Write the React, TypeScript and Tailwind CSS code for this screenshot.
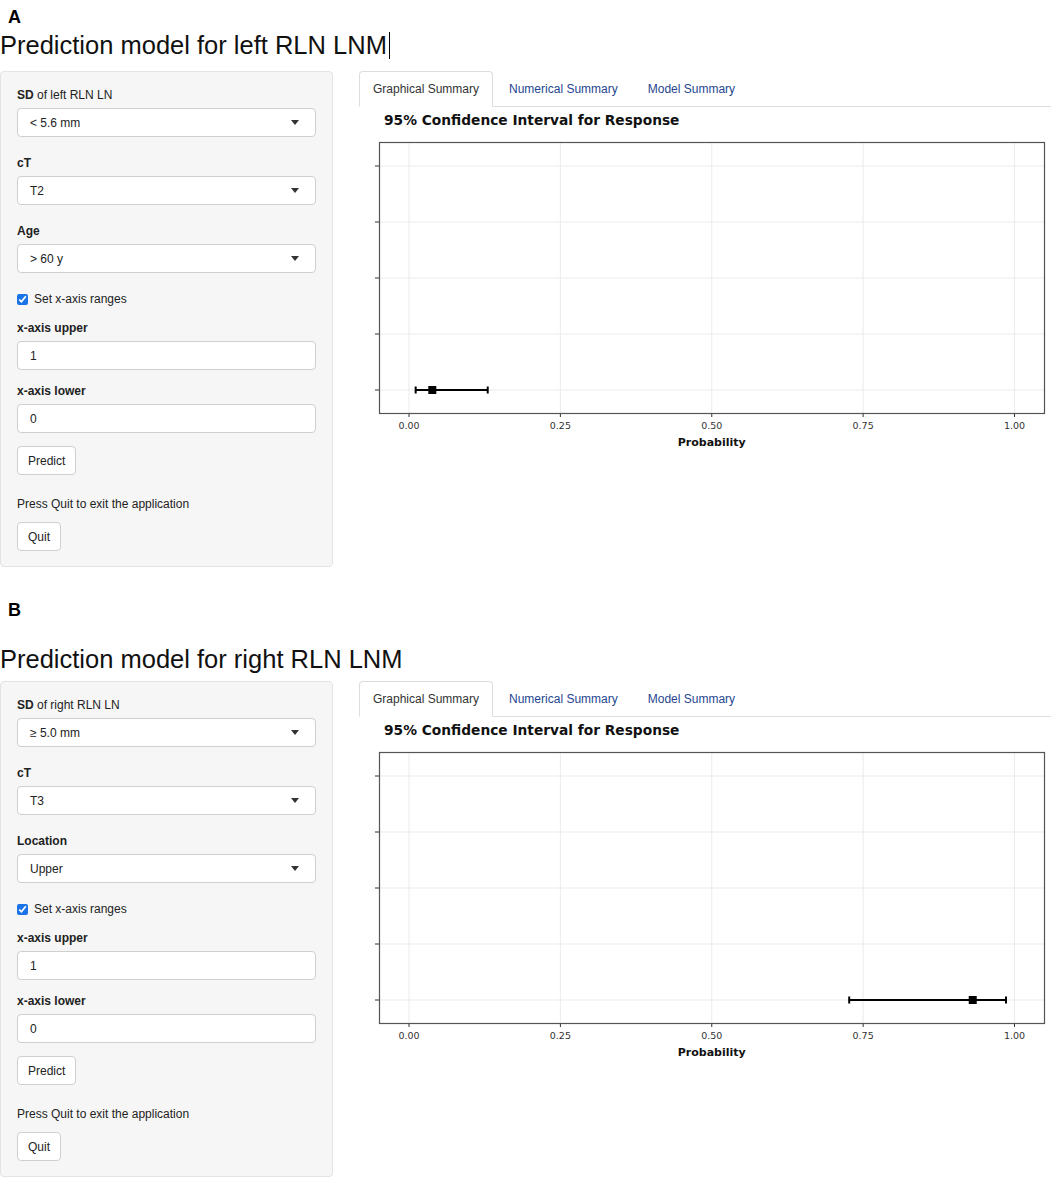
import React from "react";

type Field = { bold: string; rest?: string; value: string };

const FONT = { fontFamily: '"Liberation Sans", Arial, sans-serif' };

function Select({ value }: { value: string }) {
  return (
    <div className="flex h-[29px] items-center justify-between rounded-[4px] border border-[#cfcfcf] bg-white pl-[12px] pr-[16px] text-[12px] text-[#222]">
      <span>{value}</span>
      <span className="h-0 w-0 border-x-[4px] border-t-[5px] border-x-transparent border-t-[#333]" />
    </div>
  );
}

function TextInput({ value }: { value: string }) {
  return (
    <div className="flex h-[29px] items-center rounded-[4px] border border-[#cfcfcf] bg-white pl-[12px] text-[12px] text-[#222]">
      {value}
    </div>
  );
}

function Button({ children }: { children: React.ReactNode }) {
  return (
    <div className="inline-flex h-[29px] items-center rounded-[4px] border border-[#cfcfcf] bg-white px-[10px] text-[12px] text-[#222]">
      {children}
    </div>
  );
}

function Label({ bold, rest }: { bold: string; rest?: string }) {
  return (
    <div className="mb-[5px] h-[16px] text-[12px] leading-[16px] text-[#222]">
      <span className="font-bold">{bold}</span>
      {rest ? <span>{rest}</span> : null}
    </div>
  );
}

function Sidebar({ fields }: { fields: Field[] }) {
  return (
    <div className="w-[333px] shrink-0 rounded-[4px] border border-[#e3e3e3] bg-[#f6f6f6] px-[16px] pb-[15px] pt-[15px]">
      {fields.map((f, i) => (
        <div key={i} className={i === 0 ? "" : "mt-[18px]"}>
          <Label bold={f.bold} rest={f.rest} />
          <Select value={f.value} />
        </div>
      ))}
      <div className="mt-[18px] flex h-[16px] items-center gap-[6px] text-[12px] text-[#222]">
        <input type="checkbox" checked readOnly className="m-0 h-[11px] w-[11px] accent-[#1a73e8]" />
        <span>Set x-axis ranges</span>
      </div>
      <div className="mt-[13px]">
        <Label bold="x-axis upper" />
        <TextInput value="1" />
      </div>
      <div className="mt-[13px]">
        <Label bold="x-axis lower" />
        <TextInput value="0" />
      </div>
      <div className="mt-[13px]">
        <Button>Predict</Button>
      </div>
      <div className="mt-[21px] h-[16px] text-[12px] leading-[16px] text-[#222]">
        Press Quit to exit the application
      </div>
      <div className="mt-[10px]">
        <Button>Quit</Button>
      </div>
    </div>
  );
}

function Tabs() {
  return (
    <div className="flex border-b border-[#ddd] text-[12px] leading-[14px]">
      <div className="-mb-px mr-[2px] rounded-t-[4px] border border-[#ddd] border-b-white bg-white px-[13px] py-[10px] text-[#333]">
        Graphical Summary
      </div>
      <div className="-mb-px mr-[2px] border border-transparent px-[13px] py-[10px] text-[#25468f]">
        Numerical Summary
      </div>
      <div className="-mb-px mr-[2px] border border-transparent px-[13px] py-[10px] text-[#25468f]">
        Model Summary
      </div>
    </div>
  );
}

function Chart({ lo, pt, hi }: { lo: number; pt: number; hi: number }) {
  const x = (v: number) => 50 + 605.5 * v;
  const ys = [59, 115, 171, 227, 283];
  const ticks = [0, 0.25, 0.5, 0.75, 1];
  const labels = ["0.00", "0.25", "0.50", "0.75", "1.00"];
  const py = 283;
  return (
    <svg width="692" height="345" viewBox="0 0 692 345" className="block">
      <text x="25" y="17.5" fontFamily='"DejaVu Sans", Verdana, sans-serif' fontWeight="bold" fontSize="13.75" fill="#111">
        95% Confidence Interval for Response
      </text>
      <rect x="20.5" y="35.5" width="665" height="271" fill="#fff" />
      {ys.map((y) => (
        <line key={"h" + y} x1="21" x2="685" y1={y} y2={y} stroke="#ebebeb" strokeWidth="1" />
      ))}
      {ticks.map((t) => (
        <line key={"v" + t} x1={x(t)} x2={x(t)} y1="36" y2="306" stroke="#ebebeb" strokeWidth="1" />
      ))}
      <rect x="20.5" y="35.5" width="665" height="271" fill="none" stroke="#555" strokeWidth="1.2" />
      {ys.map((y) => (
        <line key={"yt" + y} x1="16" x2="20" y1={y} y2={y} stroke="#333" strokeWidth="1" />
      ))}
      {ticks.map((t) => (
        <line key={"xt" + t} x1={x(t)} x2={x(t)} y1="307" y2="310" stroke="#333" strokeWidth="1" />
      ))}
      {ticks.map((t, i) => (
        <text
          key={"xl" + t}
          x={x(t)}
          y="321.8"
          textAnchor="middle"
          fontFamily='"DejaVu Sans", Verdana, sans-serif'
          fontSize="9.5"
          fill="#333"
        >
          {labels[i]}
        </text>
      ))}
      <text
        x={x(0.5)}
        y="338.7"
        textAnchor="middle"
        fontFamily='"DejaVu Sans", Verdana, sans-serif'
        fontWeight="bold"
        fontSize="11"
        fill="#111"
      >
        Probability
      </text>
      <line x1={x(lo)} x2={x(hi)} y1={py} y2={py} stroke="#000" strokeWidth="2" />
      <line x1={x(lo)} x2={x(lo)} y1={py - 3.5} y2={py + 3.5} stroke="#000" strokeWidth="2" />
      <line x1={x(hi)} x2={x(hi)} y1={py - 3.5} y2={py + 3.5} stroke="#000" strokeWidth="2" />
      <rect x={x(pt) - 4} y={py - 4} width="8" height="8" fill="#000" />
    </svg>
  );
}

function Section({
  letter,
  title,
  cursor,
  fields,
  ci,
  letterMt,
  titleMt,
  bodyMt,
}: {
  letter: string;
  title: string;
  cursor?: boolean;
  fields: Field[];
  ci: { lo: number; pt: number; hi: number };
  letterMt: string;
  titleMt: string;
  bodyMt: string;
}) {
  return (
    <div>
      <div className={`${letterMt} pl-[8px] text-[18px] font-bold leading-[20px] text-black`}>{letter}</div>
      <div className={`${titleMt} flex items-center text-[25.5px] leading-[30px] text-[#111]`}>
        <span>{title}</span>
        {cursor ? <span className="ml-[2px] inline-block h-[27px] w-px bg-black" /> : null}
      </div>
      <div className={`${bodyMt} flex items-start gap-[26px]`}>
        <Sidebar fields={fields} />
        <div className="min-w-0 flex-1">
          <Tabs />
          <Chart lo={ci.lo} pt={ci.pt} hi={ci.hi} />
        </div>
      </div>
    </div>
  );
}

export default function App() {
  return (
    <div className="h-[1178px] w-[1051px] overflow-hidden bg-white" style={FONT}>
      <Section
        letter="A"
        title="Prediction model for left RLN LNM"
        cursor
        letterMt="pt-[7px]"
        titleMt="mt-[3px]"
        bodyMt="mt-[11px]"
        fields={[
          { bold: "SD", rest: " of left RLN LN", value: "< 5.6 mm" },
          { bold: "cT", value: "T2" },
          { bold: "Age", value: "> 60 y" },
        ]}
        ci={{ lo: 0.011, pt: 0.0385, hi: 0.13 }}
      />
      <Section
        letter="B"
        title="Prediction model for right RLN LNM"
        letterMt="mt-[33px]"
        titleMt="mt-[24px]"
        bodyMt="mt-[7px]"
        fields={[
          { bold: "SD", rest: " of right RLN LN", value: "≥ 5.0 mm" },
          { bold: "cT", value: "T3" },
          { bold: "Location", value: "Upper" },
        ]}
        ci={{ lo: 0.727, pt: 0.931, hi: 0.986 }}
      />
    </div>
  );
}
